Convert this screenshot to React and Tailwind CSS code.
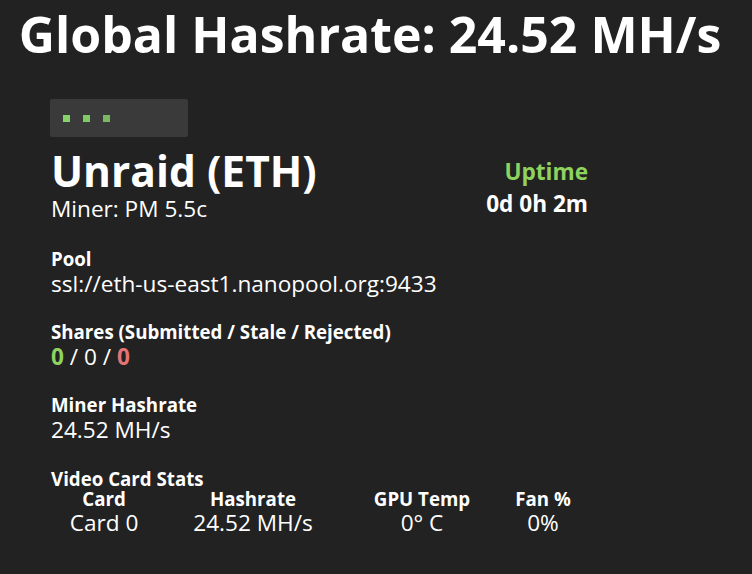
export default function App() {
  return (
    <div className="min-h-screen bg-[#222222] text-white font-['Open_Sans',sans-serif]">
      {/* Header */}
      <h1 className="pr-[12px] text-center text-[50px] font-bold leading-[68px]">
        Global Hashrate: 24.52 MH/s
      </h1>

      <div className="pl-[51px] pt-[31px] pr-[40px]">
        {/* Loader box */}
        <div className="-ml-px flex h-[38px] w-[138px] items-center gap-[13px] rounded-[2px] bg-[#3a3a3a] pl-[13px]">
          <span className="h-[7px] w-[7px] bg-[#86d36b]" />
          <span className="h-[7px] w-[7px] bg-[#7fca66]" />
          <span className="h-[7px] w-[7px] bg-[#78b962]" />
        </div>

        {/* Miner title + uptime */}
        <div className="mt-[9px] flex">
          <div className="w-[427px]">
            <div className="text-[42.5px] font-bold leading-[50px]">Unraid (ETH)</div>
            <div className="text-[22.6px] leading-[26px]">Miner: PM 5.5c</div>
          </div>
          <div className="mt-[10px] w-[110px] text-right">
            <div className="text-[22.6px] font-bold leading-[32px] text-[#8fd35f]">Uptime</div>
            <div className="text-[22.6px] font-bold leading-[32px]">0d 0h 2m</div>
          </div>
        </div>

        {/* Pool */}
        <div className="mt-[25px]">
          <div className="text-[18.7px] font-bold leading-[24px]">Pool</div>
          <div className="text-[22.6px] leading-[26px]">ssl://eth-us-east1.nanopool.org:9433</div>
        </div>

        {/* Shares */}
        <div className="mt-[23px]">
          <div className="text-[18.7px] font-bold leading-[24px]">Shares (Submitted / Stale / Rejected)</div>
          <div className="text-[22.6px] leading-[26px]">
            <span className="font-bold text-[#8fd35f]">0</span> / 0 /{' '}
            <span className="font-bold text-[#e57373]">0</span>
          </div>
        </div>

        {/* Miner hashrate */}
        <div className="mt-[23px]">
          <div className="text-[18.7px] font-bold leading-[24px]">Miner Hashrate</div>
          <div className="text-[22.6px] leading-[26px]">24.52 MH/s</div>
        </div>

        {/* Video card stats */}
        <div className="mt-[26px]">
          <div className="text-[18.7px] font-bold leading-[20px]">Video Card Stats</div>
          <table className="text-center">
            <thead>
              <tr className="text-[18.7px] leading-[20px]">
                <th className="w-[106px] p-0 font-bold">Card</th>
                <th className="w-[192px] p-0 font-bold">Hashrate</th>
                <th className="w-[146px] p-0 font-bold">GPU Temp</th>
                <th className="w-[96px] p-0 font-bold">Fan %</th>
              </tr>
            </thead>
            <tbody>
              <tr className="text-[22.6px] leading-[28px]">
                <td className="p-0">Card 0</td>
                <td className="p-0">24.52 MH/s</td>
                <td className="p-0">0° C</td>
                <td className="p-0">0%</td>
              </tr>
            </tbody>
          </table>
        </div>
      </div>
    </div>
  );
}
